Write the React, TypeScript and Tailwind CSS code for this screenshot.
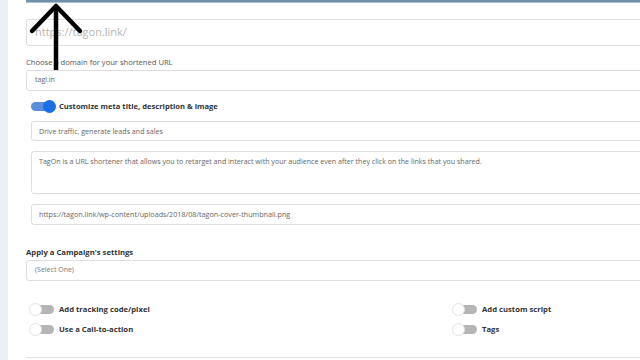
import React from "react";

function Toggle({ on }: { on?: boolean }) {
  if (on) {
    return (
      <div className="relative w-[25px] h-[13px] shrink-0">
        <div className="absolute left-0 top-[2px] w-[22px] h-[9px] rounded-full bg-[#5b8edb]" />
        <div className="absolute right-0 top-0 w-[13px] h-[13px] rounded-full bg-[#1a6fe6]" />
      </div>
    );
  }
  return (
    <div className="relative w-[25px] h-[13px] shrink-0">
      <div className="absolute left-[6px] top-[2px] w-[19px] h-[9px] rounded-r-full bg-[#b5b5b5]" />
      <div className="absolute left-0 top-0 w-[13px] h-[13px] rounded-full bg-white border border-[#e4e4e4]" />
    </div>
  );
}

export default function App() {
  const font = { fontFamily: '"Open Sans", "Liberation Sans", sans-serif' };
  return (
    <div className="w-[640px] h-[360px] overflow-hidden bg-white flex relative" style={font}>
      <div className="w-[8px] h-full bg-[#eceef9] shrink-0" />
      <div className="ml-[18px] w-[630px] shrink-0 flex flex-col">
        <div className="h-[3px] bg-[#6d91aa] border-b border-[#a9c3d2]" />
        <div className="mt-[16px] h-[27px] border border-[#dedede] rounded-[3px] flex items-center pl-[8px] text-[11px] text-[#b4b4b4]">
          https://tagon.link/
        </div>
        <div className="mt-[11px] text-[7.6px] leading-[10px] text-[#555]">Choose a domain for your shortened URL</div>
        <div className="mt-[3px] h-[21px] border border-[#dedede] rounded-[3px] flex items-center pl-[8px] text-[7px] text-[#666]">
          tagl.in
        </div>
        <div className="mt-[9px] ml-[5px] flex items-center gap-[3px]">
          <Toggle on />
          <span className="text-[7.6px] font-bold text-[#333]">Customize meta title, description &amp; image</span>
        </div>
        <div className="ml-[5px] mt-[8px] flex flex-col">
          <div className="h-[20px] border border-[#dedede] rounded-[3px] flex items-center pl-[7px] text-[7.1px] text-[#666]">
            Drive traffic, generate leads and sales
          </div>
          <div className="mt-[10px] h-[43px] border border-[#dedede] rounded-[3px] pl-[7px] pt-[5px] text-[7.1px] leading-[9px] text-[#666]">
            TagOn is a URL shortener that allows you to retarget and interact with your audience even after they click on the links that you shared.
          </div>
          <div className="mt-[10px] h-[21px] border border-[#dedede] rounded-[3px] flex items-center pl-[7px] text-[7.2px] text-[#666]">
            https://tagon.link/wp-content/uploads/2018/08/tagon-cover-thumbnail.png
          </div>
        </div>
        <div className="mt-[22px] text-[7.7px] leading-[10px] font-bold text-[#333]">Apply a Campaign&apos;s settings</div>
        <div className="mt-[3px] h-[21px] border border-[#dedede] rounded-[3px] flex items-center pl-[8px] text-[7px] text-[#777]">
          (Select One)
        </div>
        <div className="mt-[22px] ml-[3px] grid grid-cols-[423px_1fr] gap-y-[7px]">
          <div className="flex items-center gap-[5px]">
            <Toggle />
            <span className="text-[7.7px] font-bold text-[#333]">Add tracking code/pixel</span>
          </div>
          <div className="flex items-center gap-[5px]">
            <Toggle />
            <span className="text-[7.7px] font-bold text-[#333]">Add custom script</span>
          </div>
          <div className="flex items-center gap-[5px]">
            <Toggle />
            <span className="text-[7.7px] font-bold text-[#333]">Use a Call-to-action</span>
          </div>
          <div className="flex items-center gap-[5px]">
            <Toggle />
            <span className="text-[7.7px] font-bold text-[#333]">Tags</span>
          </div>
        </div>
        <div className="mt-[21px] h-[1px] bg-[#e4e4e4]" />
      </div>
      <svg className="absolute left-0 top-0" width="100" height="80" viewBox="0 0 100 80">
        <path d="M56 70 L56 8" stroke="#000" strokeWidth="4.5" fill="none" />
        <path d="M32 31 L56 6 L80 31" stroke="#000" strokeWidth="4.5" fill="none" strokeLinejoin="round" strokeLinecap="round" />
      </svg>
    </div>
  );
}
